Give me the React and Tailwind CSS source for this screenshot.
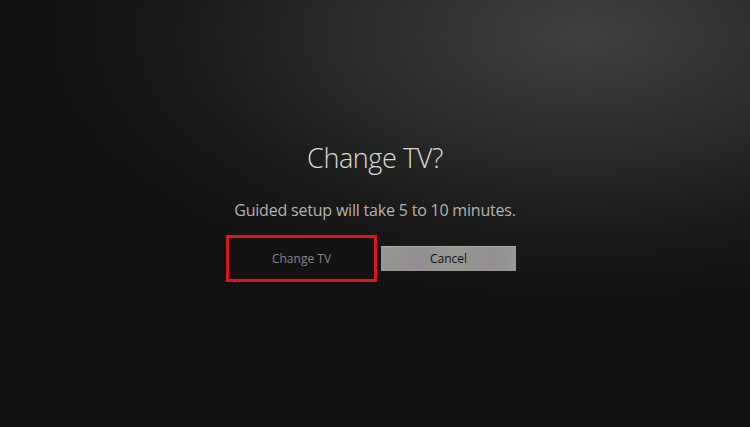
import React from 'react'

const ChangeTvDialog = () => {
  return (
    <div className="w-full h-[427px] overflow-hidden bg-[radial-gradient(ellipse_75%_65%_at_78%_8%,#3d403f_0%,#2a2c2b_40%,#191919_72%,#111111_100%)] flex flex-col items-center font-['Open_Sans',sans-serif]">
      <h1 className="mt-[140px] text-[27px] leading-[35px] font-light text-[#dadad2] tracking-[-0.4px]">
        Change TV?
      </h1>
      <p className="mt-[24px] text-[16px] leading-[22px] text-[#b3b3ad] tracking-[-0.2px]">
        Guided setup will take 5 to 10 minutes.
      </p>
      <div className="mt-[14px] flex items-center gap-[4px] ml-[-8px]">
        <button className="w-[151px] h-[47px] border-[3px] border-[#e0141c] bg-[#121212] flex items-center justify-center text-[12px] text-[#86868a]">
          Change TV
        </button>
        <button className="w-[135px] h-[25px] bg-[linear-gradient(100deg,#979892_0%,#938e92_30%,#969a92_55%,#948f94_80%,#989993_100%)] border-t border-[#aeaea8] flex items-center justify-center text-[12px] font-medium text-[#121212]">
          Cancel
        </button>
      </div>
    </div>
  )
}

export default function App() {
  return <ChangeTvDialog />
}
